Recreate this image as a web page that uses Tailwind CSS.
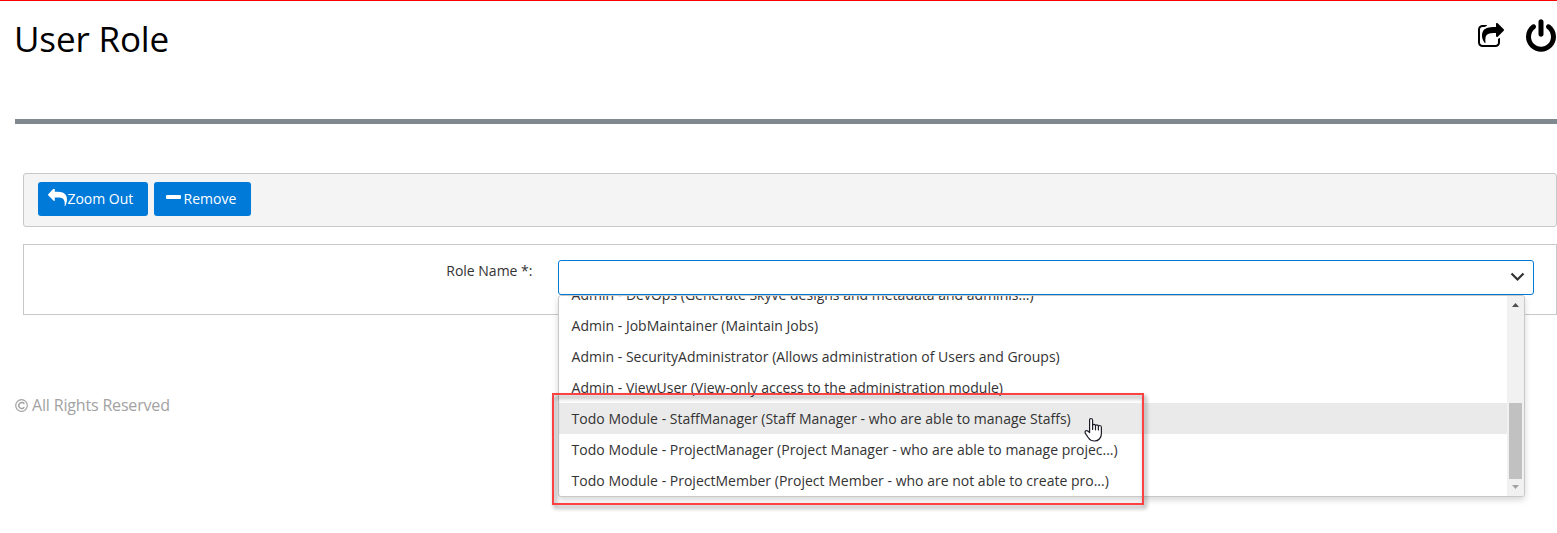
<!DOCTYPE html>
<html lang="en">
<head>
<meta charset="utf-8">
<title>User Role</title>
<script src="https://cdn.jsdelivr.net/npm/@tailwindcss/browser@4"></script>
</head>
<body class="relative h-[533px] w-[1557px] overflow-hidden bg-white font-['Open_Sans',sans-serif] text-sm text-[#333]">
<header class="flex h-[119px] items-start justify-between border-t border-[#ff0000] pl-[15px] pr-px text-black">
  <h1 class="-ml-px mt-[14px] text-[35px] leading-[48px] tracking-[-0.15px]">User Role</h1>
  <div class="mt-[18px] flex items-start gap-[22px]">
    <svg class="mt-1 h-6 w-[26px]" viewBox="64 0 1664 1536" fill="currentColor"><path d="M1472 989v259q0 119-84.5 203.5t-203.5 84.5h-832q-119 0-203.5-84.5t-84.5-203.5v-832q0-119 84.5-203.5t203.5-84.5h255q13 0 22.5 9.5t9.5 22.500q0 27-26 32-77 26-133 60-10 4-16 4h-112q-66 0-113 47t-47 113v832q0 66 47 113t113 47h832q66 0 113-47t47-113v-214q0-19 18-29 28-13 54-37 16-16 35-8 21 9 21 29zm237-496l-384 384q-18 19-45 19-12 0-25-5-39-17-39-59v-192h-160q-323 0-438 131-119 137-74 473 3 23-20 34-8 2-12 2-16 0-26-13-10-14-21-31t-39.500-68.500-49.500-99.500-38.500-114-17.500-122q0-49 3.500-91t14-90 28-88 47-81.500 68.500-74 94.500-61.500 124.500-48.500 159.500-30.500 196.500-11h160v-192q0-42 39-59 13-5 25-5 26 0 45 19l384 384q19 19 19 45t-19 45z"/></svg>
    <svg class="h-[33px] w-[30px]" viewBox="128 0 1536 1664" fill="currentColor"><path d="M1664 896q0 156-61 298t-164 245-245 164-298 61-298-61-245-164-164-245-61-298q0-182 80.500-343t226.500-270q43-32 95.500-25t83.500 50q32 42 24.500 94.500t-49.500 84.500q-98 74-151.500 181t-53.500 228q0 104 40.500 198.500t109.500 163.500 163.500 109.500 198.500 40.500 198.500-40.500 163.500-109.500 109.500-163.500 40.500-198.500q0-121-53.500-228t-151.500-181q-42-32-49.500-84.500t24.500-94.500q31-43 84-50t95 25q146 109 226.500 270t80.500 343zm-640-768v640q0 52-38 90t-90 38-90-38-38-90v-640q0-52 38-90t90-38 90 38 38 90z"/></svg>
  </div>
</header>
<div class="ml-[15px] h-[5px] bg-[#808890]"></div>
<main class="ml-[23px] mt-[49px]">
  <div class="flex h-[54px] gap-[6px] rounded-[3px] border border-[#c8c8c8] bg-[#f4f4f4] pl-[14px] pt-2">
    <button class="flex h-[34px] w-[110px] items-center rounded-[3px] bg-[#007ad9] pl-[10px] text-white">
      <svg class="-mt-[3px] h-[17px] w-[19px] shrink-0" viewBox="0 128 1792 1536" fill="currentColor" preserveAspectRatio="none"><path d="M1792 1120q0 166-127 451-3 7-10.500 24t-13.500 30-13 22q-12 17-28 17-15 0-23.500-10t-8.500-25q0-9 2.500-26.500t2.500-23.500q5-68 5-123 0-101-17.500-181t-48.500-138.500-80-101-105.500-69.500-133-42.500-154-21.500-175.500-6h-224v256q0 26-19 45t-45 19-45-19l-512-512q-19-19-19-45t19-45l512-512q19-19 45-19t45 19 19 45v256h224q713 0 875 403 53 134 53 333z"/></svg>
      <span class="ml-[0.4px]">Zoom Out</span>
    </button>
    <button class="flex h-[34px] w-[97px] items-center rounded-[3px] bg-[#007ad9] pl-[12px] text-white">
      <span class="-mt-1 mr-[2.600px] h-1 w-[15px] rounded-[1px] bg-white"></span>
      <span>Remove</span>
    </button>
  </div>
  <div class="mt-[17px] flex h-[71px] items-start border border-[#c8c8c8] pt-[15px]">
    <label class="mt-px w-[508.500px] text-right leading-5">Role Name *:</label>
    <div class="relative ml-[25.500px] flex h-[35px] w-[976px] items-center justify-end rounded-[3px] border border-[#007ad9] bg-white pr-[8px]">
      <svg class="-mt-px h-[10px] w-[15px]" viewBox="0 0 15 10" fill="none" stroke="#333" stroke-width="2.200"><path d="M1.500 1.500l6 6 6-6"/></svg>
      <div class="absolute -left-px top-[34px] z-10 flex h-[202px] w-[967px] overflow-hidden rounded-[3px] border border-[#c8c8c8] bg-white shadow-[0_3px_6px_rgba(0,0,0,0.16)]">
        <ul class="-mt-[17px] w-[948px] shrink-0 leading-[31px] *:h-[31px] *:whitespace-nowrap *:pl-[12.600px] tracking-[0.007px]">
          <li>Admin - DevOps (Generate Skyve designs and metadata and adminis...)</li>
          <li>Admin - JobMaintainer (Maintain Jobs)</li>
          <li>Admin - SecurityAdministrator (Allows administration of Users and Groups)</li>
          <li>Admin - ViewUser (View-only access to the administration module)</li>
          <li class="bg-[#eaeaea]">Todo Module - StaffManager (Staff Manager - who are able to manage Staffs)</li>
          <li>Todo Module - ProjectManager (Project Manager - who are able to manage projec...)</li>
          <li>Todo Module - ProjectMember (Project Member - who are not able to create pro...)</li>
        </ul>
        <div class="flex w-[17px] flex-col items-center bg-[#f1f1f1]">
          <svg class="mt-[7px] h-1 w-[7px] shrink-0" viewBox="0 0 7 4" fill="#505050"><path d="M0 4L3.500 0L7 4z"/></svg>
          <div class="mt-[96px] h-[76px] w-[13px] shrink-0 bg-[#c1c1c1]"></div>
          <svg class="mt-[6px] h-1 w-[7px] shrink-0" viewBox="0 0 7 4" fill="#a3a3a3"><path d="M0 0h7L3.500 4z"/></svg>
        </div>
      </div>
    </div>
  </div>
</main>
<footer class="ml-[15px] mt-[78px] flex items-center gap-[4px] text-base leading-6 text-[#a2a2a2]">
  <svg class="size-[13px]" viewBox="0 0 13 13" fill="none" stroke="currentColor" stroke-width="1.200"><circle cx="6.500" cy="6.500" r="5.800"/><path d="M9.300 4.900A3 3 0 1 0 9.300 8.100" stroke-width="1.500"/></svg>
  <span class="tracking-[-0.170px]">All Rights Reserved</span>
</footer>
<div class="absolute left-[552px] top-[393px] z-20 h-[112px] w-[592px] border-2 border-[#fb4141] drop-shadow-[2px_3px_2px_rgba(0,0,0,0.45)]"></div>
<svg class="absolute left-[1084px] top-[417px] z-30 h-[26px] w-[19px]" viewBox="0 0 19 26" fill="#fff" stroke="#1c1c28" stroke-width="1.200" stroke-linejoin="round" stroke-linecap="round"><path d="M5.600 15.500V3.200q0-1.700 1.400-1.700t1.600 1.700v5.300q0-1.200 1.400-1.200t1.500 1.500q.1-1 1.400-1t1.500 1.500q.2-.8 1.400-.8 1.600 0 1.600 2v6q0 3.500-2 5.500-1.800 2-4.900 2-4 0-6-3L1.400 16.400q-.8-1.800.4-2.600 1.100-.6 2.300.4z"/><path d="M8.600 8.500v4M11.500 8.800v4M14.400 9.500v3.500" fill="none"/></svg>
</body>
</html>
